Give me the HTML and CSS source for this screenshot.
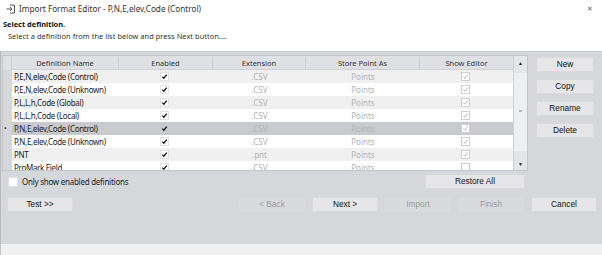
FILE: index.html
```html
<!DOCTYPE html>
<html>
<head>
<meta charset="utf-8">
<link rel="stylesheet" href="styles.css">
</head>
<body>
<div class="window">
  <div class="titlebar">
    <svg class="ticon" width="10" height="10" viewBox="0 0 10 10"><path d="M4 1 H8.5 V9 H4" fill="none" stroke="#555" stroke-width="1"/><path d="M0.5 5 H6 M4 3 L6 5 L4 7" fill="none" stroke="#555" stroke-width="1"/></svg>
    <span class="ttext">Import Format Editor - P,N,E,elev,Code (Control)</span>
    <span class="close">✕</span>
  </div>
  <div class="intro">
    <div class="intro-title">Select definition.</div>
    <div class="intro-desc">Select a definition from the list below and press Next button....</div>
  </div>
  <div class="panel">
    <div class="top">
      <div class="left">
        <div class="grid">
          <div class="gridmain">
            <div class="row head">
              <div class="rh"></div>
              <div class="c">Definition Name</div>
              <div class="c">Enabled</div>
              <div class="c">Extension</div>
              <div class="c">Store Point As</div>
              <div class="c">Show Editor</div>
            </div>
            <div class="body">
              <div class="row alt"><div class="rh"></div><div class="c name">P,E,N,elev,Code (Control)</div><div class="c"><span class="cb"><svg viewBox="0 0 8 8"><path d="M1.5 4.2 L3.2 6 L6.6 1.8" class="ck"/></svg></span></div><div class="c dim">.CSV</div><div class="c dim">Points</div><div class="c"><span class="cb dis"><svg viewBox="0 0 8 8"><path d="M1.5 4.2 L3.2 6 L6.6 1.8" class="ck"/></svg></span></div></div>
              <div class="row"><div class="rh"></div><div class="c name">P,E,N,elev,Code (Unknown)</div><div class="c"><span class="cb"><svg viewBox="0 0 8 8"><path d="M1.5 4.2 L3.2 6 L6.6 1.8" class="ck"/></svg></span></div><div class="c dim">.CSV</div><div class="c dim">Points</div><div class="c"><span class="cb dis"><svg viewBox="0 0 8 8"><path d="M1.5 4.2 L3.2 6 L6.6 1.8" class="ck"/></svg></span></div></div>
              <div class="row alt"><div class="rh"></div><div class="c name">P,L,L,h,Code (Global)</div><div class="c"><span class="cb"><svg viewBox="0 0 8 8"><path d="M1.5 4.2 L3.2 6 L6.6 1.8" class="ck"/></svg></span></div><div class="c dim">.CSV</div><div class="c dim">Points</div><div class="c"><span class="cb dis"><svg viewBox="0 0 8 8"><path d="M1.5 4.2 L3.2 6 L6.6 1.8" class="ck"/></svg></span></div></div>
              <div class="row"><div class="rh"></div><div class="c name">P,L,L,h,Code (Local)</div><div class="c"><span class="cb"><svg viewBox="0 0 8 8"><path d="M1.5 4.2 L3.2 6 L6.6 1.8" class="ck"/></svg></span></div><div class="c dim">.CSV</div><div class="c dim">Points</div><div class="c"><span class="cb dis"><svg viewBox="0 0 8 8"><path d="M1.5 4.2 L3.2 6 L6.6 1.8" class="ck"/></svg></span></div></div>
              <div class="row sel"><div class="rh">•</div><div class="c name">P,N,E,elev,Code (Control)</div><div class="c"><span class="cb"><svg viewBox="0 0 8 8"><path d="M1.5 4.2 L3.2 6 L6.6 1.8" class="ck"/></svg></span></div><div class="c dim">.CSV</div><div class="c dim">Points</div><div class="c"><span class="cb dis"><svg viewBox="0 0 8 8"><path d="M1.5 4.2 L3.2 6 L6.6 1.8" class="ck"/></svg></span></div></div>
              <div class="row"><div class="rh"></div><div class="c name">P,N,E,elev,Code (Unknown)</div><div class="c"><span class="cb"><svg viewBox="0 0 8 8"><path d="M1.5 4.2 L3.2 6 L6.6 1.8" class="ck"/></svg></span></div><div class="c dim">.CSV</div><div class="c dim">Points</div><div class="c"><span class="cb dis"><svg viewBox="0 0 8 8"><path d="M1.5 4.2 L3.2 6 L6.6 1.8" class="ck"/></svg></span></div></div>
              <div class="row alt"><div class="rh"></div><div class="c name">PNT</div><div class="c"><span class="cb"><svg viewBox="0 0 8 8"><path d="M1.5 4.2 L3.2 6 L6.6 1.8" class="ck"/></svg></span></div><div class="c dim">.pnt</div><div class="c dim">Points</div><div class="c"><span class="cb dis"><svg viewBox="0 0 8 8"><path d="M1.5 4.2 L3.2 6 L6.6 1.8" class="ck"/></svg></span></div></div>
              <div class="row"><div class="rh"></div><div class="c name">ProMark Field</div><div class="c"><span class="cb"><svg viewBox="0 0 8 8"><path d="M1.5 4.2 L3.2 6 L6.6 1.8" class="ck"/></svg></span></div><div class="c dim">.CSV</div><div class="c dim">Points</div><div class="c"><span class="cb dis"></span></div></div>
            </div>
          </div>
          <div class="scroll">
            <div class="arrow">▲</div>
            <div class="track"><div class="thumb"><span class="grip"></span></div></div>
            <div class="arrow">▼</div>
          </div>
        </div>
      </div>
      <div class="side">
        <button class="btn">New</button>
        <button class="btn">Copy</button>
        <button class="btn">Rename</button>
        <button class="btn">Delete</button>
      </div>
    </div>
    <div class="opts">
      <label class="chk"><span class="box"></span>Only show enabled definitions</label>
      <button class="btn restore">Restore All</button>
    </div>
    <div class="bottom">
      <button class="btn wide">Test &gt;&gt;</button>
      <div class="spacer"></div>
      <button class="btn wide off">&lt; Back</button>
      <button class="btn wide">Next &gt;</button>
      <button class="btn wide off">Import</button>
      <button class="btn wide off">Finish</button>
      <button class="btn wide">Cancel</button>
    </div>
  </div>
  <div class="footer"></div>
</div>
</body>
</html>
```

FILE: styles.css
```css
* { box-sizing: border-box; }
html, body { margin: 0; padding: 0; }
body {
  width: 602px;
  height: 255px;
  overflow: hidden;
  background: #f0f0f0;
  font-family: "Noto Sans", "Open Sans", sans-serif;
  color: #222;
}
.window { width: 602px; height: 255px; display: flex; flex-direction: column; }

.titlebar {
  height: 16px;
  background: #fff;
  display: flex;
  align-items: center;
  padding-left: 6px;
  padding-top: 1px;
}
.ticon { display: block; margin-right: 3px; }
.ttext { font-size: 8.2px; color: #333; }
.close { margin-left: auto; margin-right: 9px; font-size: 7px; color: #666; }

.intro { background: #fff; height: 35px; padding-top: 2px; }
.intro-title { font-size: 7.4px; font-weight: bold; padding-left: 3px; line-height: 12px; color: #111; }
.intro-desc { font-size: 7.4px; padding-left: 8px; line-height: 13px; color: #333; letter-spacing: 0.05px; }

.panel {
  background: #d6d7db;
  height: 193px;
  border-top: 1px solid #c8c9cd;
  border-left: 1px solid #b9babe;
  display: flex;
  flex-direction: column;
}
.top { display: flex; padding-top: 3px; }
.left { width: 527px; padding-left: 1px; }
.grid {
  display: flex;
  height: 116px;
  border: 1px solid #c4c5c9;
  background: #d6d7db;
}
.gridmain { flex: 1; display: flex; flex-direction: column; overflow: hidden; }
.row {
  display: grid;
  grid-template-columns: 9px 107px 94px 93px 114px 94px;
  height: 13px;
  align-items: center;
  font-size: 8px;
  line-height: 13px;
  background: #fff;
  flex-shrink: 0;
}
.row .rh { background: #d6d7db; height: 13px; font-size: 7px; color: #333; text-align: left; padding-left: 1px; line-height: 13px; }
.row.head { height: 14px; background: #dfe0e3; border-bottom: 1px solid #cfd0d3; font-size: 7.5px; }
.row.head .rh { background: #dfe0e3; height: 14px; border-right: 1px solid #cfd0d3; }
.row.head .c { text-align: center; color: #333; border-right: 1px solid #cfd0d3; height: 13px; }
.row.alt { background: #f0f0f0; }
.row.sel { background: #c9cacd; }
.body { flex: 1; overflow: hidden; }
.c { text-align: center; white-space: nowrap; overflow: hidden; height: 13px; display: flex; align-items: center; justify-content: center; }
.c.name { justify-content: flex-start; padding-left: 2px; color: #222; letter-spacing: -0.3px; }
.c.dim { color: #b3b3b3; }

.cb {
  display: inline-block;
  width: 9px;
  height: 9px;
  border: 1px solid #e2e2e2;
  background: #fff;
  margin-right: 3px;
}
.cb svg { display: block; width: 7px; height: 7px; }
.ck { fill: none; stroke: #111; stroke-width: 1.4; }
.cb.dis { border-color: #cfcfcf; }
.cb.dis .ck { stroke: #a5a5a5; stroke-width: 1; }
.row.sel .cb { background: #c9cacd; border-color: #c9cacd; }
.row.sel .cb.dis { background: #fff; border-color: #cfcfcf; }

.scroll {
  width: 14px;
  background: #e4e5e8;
  border-left: 1px solid #cfd0d3;
  display: flex;
  flex-direction: column;
  align-items: center;
}
.arrow { font-size: 5px; color: #222; height: 14px; line-height: 14px; }
.track { flex: 1; width: 100%; display: flex; flex-direction: column; padding-top: 3px; padding-bottom: 6px; }
.thumb { height: 78px; background: #eeeff1; display: flex; align-items: flex-end; justify-content: center; padding-bottom: 39px; }
.grip { display: block; width: 3px; height: 2px; background: #b8b8bb; }

.side {
  display: flex;
  flex-direction: column;
  gap: 7px;
  padding-top: 2px;
  margin-left: 8px;
}
.btn {
  font-family: "Liberation Sans", Arial, sans-serif;
  font-size: 8.3px;
  color: #111;
  background: #e6e6e8;
  border: 1px solid #dadadd;
  height: 15px;
  padding: 0;
  line-height: 13px;
  margin: 0;
}
.side .btn { width: 58px; }

.opts { display: flex; align-items: center; height: 15px; margin-top: 3px; width: 527px; }
.chk { display: flex; align-items: center; font-size: 8px; color: #222; padding-left: 7px; letter-spacing: -0.25px; }
.box { width: 10px; height: 10px; background: #fff; border: 1px solid #e0e0e0; margin-right: 4px; }
.restore { margin-left: auto; width: 100px; margin-right: 3px; }

.bottom { display: flex; gap: 7px; margin-top: 8px; padding-left: 6px; padding-right: 5px; }
.spacer { flex: 1; }
.btn.wide { width: 66px; }
.btn.off { background: #d9dadd; border-color: #d9dadd; color: #9c9c9f; }

.footer { flex: 1; background: #f0f0f0; border-left: 1px solid #c6c6c6; }
```
